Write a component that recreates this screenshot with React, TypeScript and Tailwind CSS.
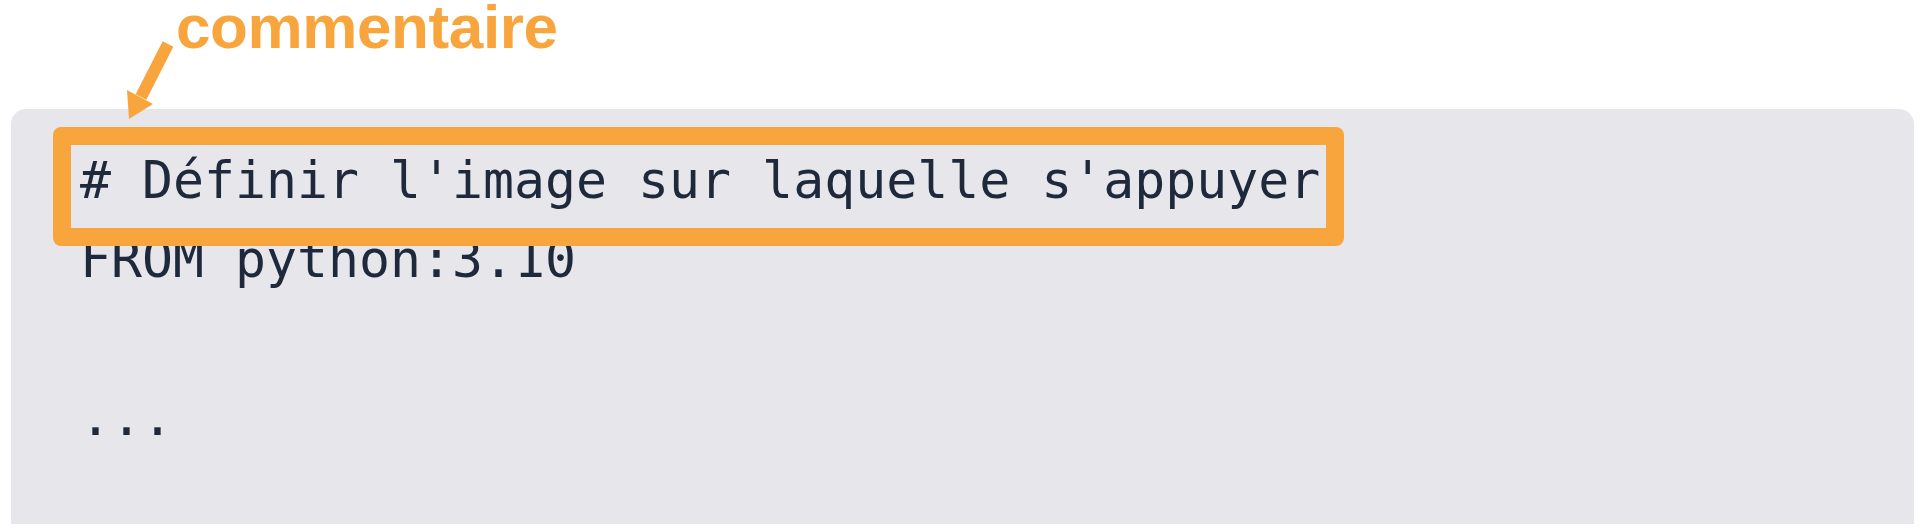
import React from 'react';

const codeLines = [
  "# Définir l'image sur laquelle s'appuyer",
  'FROM python:3.10',
  '',
  '...',
];

const App: React.FC = () => {
  return (
    <div className="relative w-[1930px] h-[528px] bg-white overflow-hidden flex flex-col">
      {/* Annotation label */}
      <div className="h-[109px] pl-[176px] pt-[2px] shrink-0">
        <span
          className="block text-[62px] leading-[49px] font-bold tracking-[-0.4px] text-[#f9a53e]"
          style={{ fontFamily: '"Liberation Sans", Arial, sans-serif' }}
        >
          commentaire
        </span>
      </div>

      {/* Arrow, drawn over the top edge of the code block */}
      <svg
        className="absolute left-0 top-0 z-10 pointer-events-none"
        width="220"
        height="130"
        viewBox="0 0 220 130"
        fill="none"
      >
        <line x1="168" y1="44" x2="141" y2="97" stroke="#f9a53e" strokeWidth="12" />
        <polygon points="129,119 153,104 127,90" fill="#f9a53e" />
      </svg>

      {/* Code block */}
      <div className="relative ml-[11px] w-[1903px] h-[415px] shrink-0 rounded-t-[15px] bg-[#e7e6eb] pl-[69px] pt-[32px]">
        <pre
          className="text-[51.5px] leading-[79px] text-[#1e293b]"
          style={{ fontFamily: '"DejaVu Sans Mono", "Liberation Mono", monospace' }}
        >
          {codeLines.map((line, i) => (
            <div key={i} className="h-[79px]">
              {line}
            </div>
          ))}
        </pre>

        {/* Highlight box */}
        <div className="absolute left-[42px] top-[18px] w-[1291px] h-[119px] border-[18px] border-[#f9a53e] rounded-[8px]" />
      </div>
    </div>
  );
};

export default App;
